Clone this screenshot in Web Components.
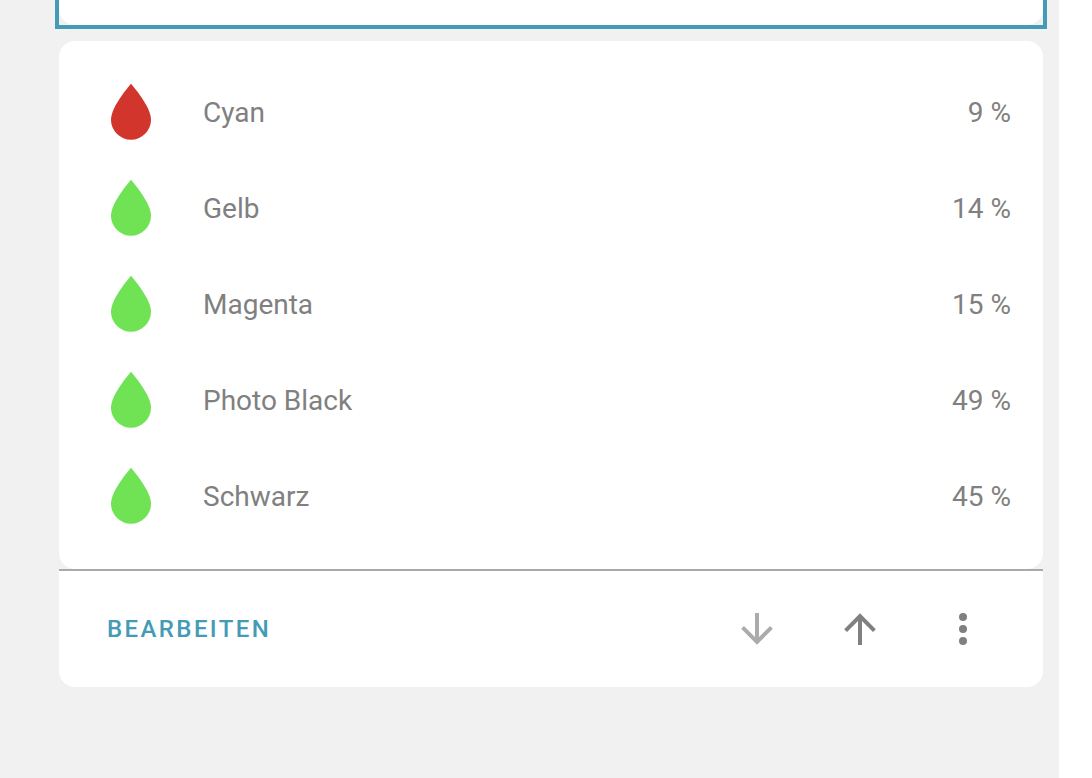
<!DOCTYPE html>
<html lang="de">
<head>
<meta charset="utf-8">
<meta name="viewport" content="width=device-width, initial-scale=1">
<title>Druckerpatronen</title>
<style>
  body { margin: 0; background: #fff; color: #808080; font-family: Roboto, sans-serif; font-size: 28px; line-height: 40px; }
</style>
</head>
<body>
<dashboard-view>
  <selected-card></selected-card>
  <card-editor>
    <ink-list>
      <ink-level name="Cyan" value="9" low></ink-level>
      <ink-level name="Gelb" value="14"></ink-level>
      <ink-level name="Magenta" value="15"></ink-level>
      <ink-level name="Photo Black" value="49"></ink-level>
      <ink-level name="Schwarz" value="45"></ink-level>
    </ink-list>
    <card-actions slot="actions"></card-actions>
  </card-editor>
</dashboard-view>

<script>
class BaseElement extends HTMLElement {
  constructor() {
    super();
    this.attachShadow({ mode: 'open' });
  }
  connectedCallback() {
    this.shadowRoot.innerHTML = this.render();
  }
}

// Grey dashboard column beside the white edge of the window
customElements.define('dashboard-view', class extends BaseElement {
  render() {
    return `
      <style>
        :host { display: block; }
        main { display: flex; flex-direction: column; gap: 12px; box-sizing: border-box;
               min-height: 100vh; margin-right: 33px; padding: 0 12px 32px 55px; background: #f1f1f1; }
      </style>
      <main><slot></slot></main>`;
  }
});

// Lower end of the highlighted card above
customElements.define('selected-card', class extends BaseElement {
  render() {
    return `
      <style>
        :host { display: block; border: 4px solid #449bb5; border-top: 0; }
        div { height: 25px; background: #fff; border-radius: 0 0 16px 16px; }
      </style>
      <div></div>`;
  }
});

customElements.define('card-editor', class extends BaseElement {
  render() {
    return `
      <style>
        :host { display: block; margin: 0 4px; }
      </style>
      <slot></slot>
      <slot name="actions"></slot>`;
  }
});

customElements.define('ink-list', class extends BaseElement {
  render() {
    return `
      <style>
        :host { display: block; }
        section { display: flex; flex-direction: column; gap: 16px; padding: 32px;
                  background: #fff; border-radius: 16px; }
      </style>
      <section><slot></slot></section>`;
  }
});

customElements.define('ink-level', class extends BaseElement {
  render() {
    return `
      <style>
        :host { display: flex; align-items: center; gap: 32px; height: 80px; --drop: #6fe354; }
        :host([low]) { --drop: #d2352c; }
        svg { width: 80px; height: 80px; fill: var(--drop); }
        .name { flex: 1; }
      </style>
      <svg viewBox="0 0 24 24" aria-hidden="true">
        <path d="M12,20A6,6 0 0,1 6,14C6,10 12,3.25 12,3.25C12,3.25 18,10 18,14A6,6 0 0,1 12,20Z"/>
      </svg>
      <div class="name">${this.getAttribute('name')}</div>
      <div>${this.getAttribute('value')} %</div>`;
  }
});

customElements.define('card-actions', class extends BaseElement {
  render() {
    return `
      <style>
        :host { display: flex; align-items: center; justify-content: space-between; height: 116px;
                padding: 0 32px; background: #fff; border-top: 2px solid #a9a9a9; border-radius: 0 0 16px 16px; }
        button { border: 0; background: none; padding: 0; color: inherit; font: inherit; cursor: pointer; }
        .edit { padding: 0 16px; color: #449bb5; font-size: 24px; font-weight: 500; letter-spacing: 0.1em; }
        .icons { display: flex; gap: 7px; }
        .icon { display: flex; align-items: center; justify-content: center; width: 96px; height: 96px; }
        .icon:disabled { color: #ababab; cursor: default; }
        svg { width: 48px; height: 48px; fill: currentColor; }
      </style>
      <button class="edit" type="button">BEARBEITEN</button>
      <div class="icons">
        <button class="icon" type="button" aria-label="Nach unten" disabled>
          <svg viewBox="0 0 24 24"><path d="M11,4H13V16L18.5,10.5L19.92,11.92L12,19.84L4.08,11.92L5.5,10.5L11,16V4Z"/></svg>
        </button>
        <button class="icon" type="button" aria-label="Nach oben">
          <svg viewBox="0 0 24 24"><path d="M13,20H11V8L5.5,13.5L4.08,12.08L12,4.16L19.92,12.08L18.5,13.5L13,8V20Z"/></svg>
        </button>
        <button class="icon" type="button" aria-label="Weitere Optionen">
          <svg viewBox="0 0 24 24"><path d="M12,16A2,2 0 0,1 14,18A2,2 0 0,1 12,20A2,2 0 0,1 10,18A2,2 0 0,1 12,16M12,10A2,2 0 0,1 14,12A2,2 0 0,1 12,14A2,2 0 0,1 10,12A2,2 0 0,1 12,10M12,4A2,2 0 0,1 14,6A2,2 0 0,1 12,8A2,2 0 0,1 10,6A2,2 0 0,1 12,4Z"/></svg>
        </button>
      </div>`;
  }
});
</script>
</body>
</html>
